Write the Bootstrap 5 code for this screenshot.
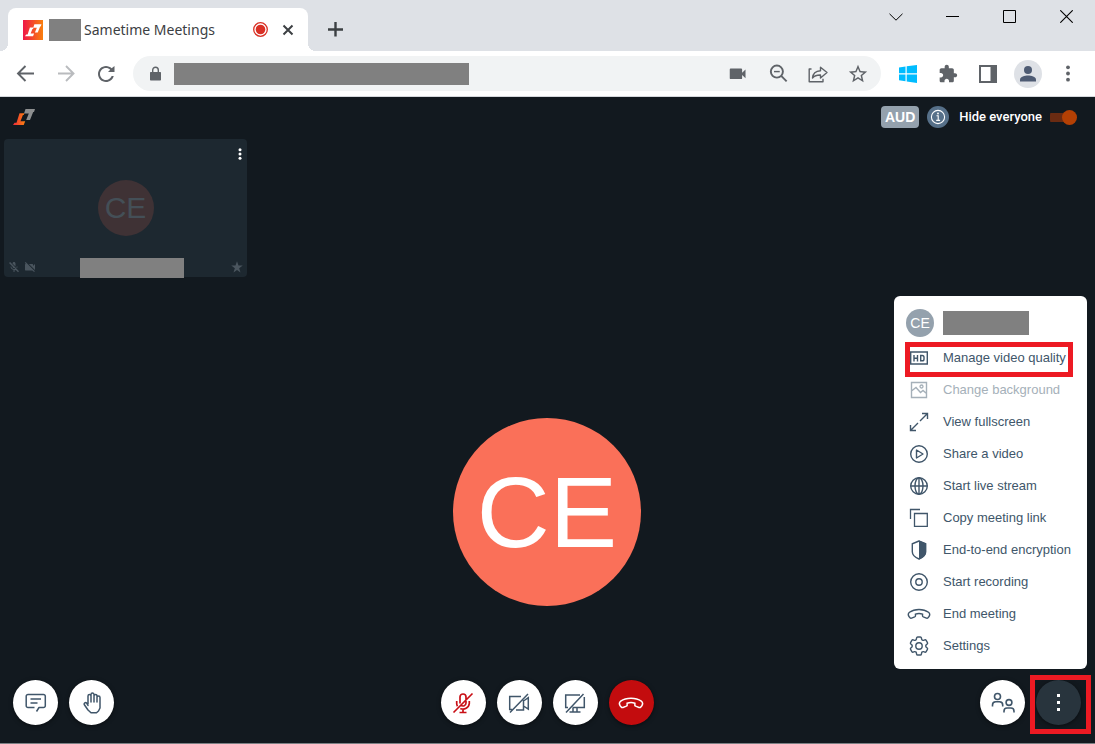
<!DOCTYPE html>
<html lang="en">
<head>
<meta charset="utf-8">
<meta name="viewport" content="width=device-width, initial-scale=1">
<title>Sametime Meetings</title>
<link href="https://cdn.jsdelivr.net/npm/bootstrap@5.3.0/dist/css/bootstrap.min.css" rel="stylesheet">
<style>
  :root { --ink: #40566a; --night: #12191f; --alert: #ed1a23; }
  body { font-family: "Liberation Sans", Arial, sans-serif; font-size: 13px; line-height: 20px; background: var(--night); border-bottom: 1px solid #7b8084; }
  svg { display: block; flex: none; }
  button { color: inherit; }
  .plain-btn { border: 0; background: none; padding: 0; display: flex; align-items: center; justify-content: center; }
  .redacted { background: #808080; flex: none; }
  .line { fill: none; stroke: currentColor; }

  /* browser chrome */
  .tabstrip { background: #dee1e6; height: 51px; color: #3c4043; }
  .tab-page { position: relative; width: 300px; height: 43px; margin: 8px 0 0 8px; padding: 0 12px 0 15px; background: #fff; border-radius: 8px 8px 0 0; }
  .tab-page::before, .tab-page::after { content: ""; position: absolute; bottom: 0; width: 8px; height: 8px; }
  .tab-page::before { left: -8px; background: radial-gradient(circle at 0 0, transparent 8px, #fff 8px); }
  .tab-page::after { right: -8px; background: radial-gradient(circle at 100% 0, transparent 8px, #fff 8px); }
  .tab-title { font-family: "Noto Sans", "Open Sans", sans-serif; font-size: 14px; margin-left: 3px; white-space: nowrap; }
  .tab-redacted { width: 32px; height: 22px; margin-left: 6px; }
  .tab-btn { width: 17px; height: 24px; margin-left: 10px; }
  .new-tab { width: 30px; height: 30px; margin: 14px 0 0 12px; }
  .win-btn { width: 57px; height: 33px; color: #000; }
  .toolbar { background: #fff; color: #5f6368; height: 46px; padding: 0 7px 0 6px; border-bottom: 1px solid #d5d8dc; }
  .tool-btn { width: 40px; height: 35px; flex: none; }
  .address { background: #f1f3f4; height: 35px; margin: 0 7px; padding: 0 3px 0 13px; border-radius: 18px; min-width: 0; }
  .url-redacted { width: 295px; height: 22px; margin-left: 10px; }
  .profile { width: 28px; height: 28px; background: #dee1e6; color: #4e5b73; }

  /* meeting */
  .meet-head { height: 42px; padding: 0 18px 2px 13px; }
  .aud { background: #94a1ad; color: #fff; font-size: 14px; height: 22px; width: 38px; border-radius: 4px; font-weight: 700; line-height: 22px; text-align: center; }
  .info-btn { width: 22px; height: 22px; background: #567089; color: #fff; margin: 0 10px 0 8px; }
  .hide-label { font-family: Roboto, "Liberation Sans", sans-serif; font-weight: 500; color: #fff; margin-right: 8px; }
  .hide-switch { appearance: none; position: relative; width: 27px; height: 15px; margin: 0; background: linear-gradient(#6a2b12, #6a2b12) 0 center / 24px 9px no-repeat; border-radius: 5px; }
  .hide-switch::before { content: ""; position: absolute; right: 0; top: 0; width: 15px; height: 15px; border-radius: 50%; background: #b44004; }
  .tile { width: 243px; height: 138px; margin-left: 4px; background: #1d2830; border-radius: 4px; display: grid; grid-template-rows: 1fr auto 1fr; color: #4a555e; }
  .tile-avatar { width: 56px; height: 56px; background: #3f3235; color: #444f57; font-size: 30px; }
  .tile-menu { color: #fff; margin: 8px 0 0 0; width: 14px; height: 14px; }
  .tile-foot { display: grid; grid-template-columns: 76px 104px 1fr; height: 20px; margin-bottom: -1px; }
  .tile-status { padding: 0 4px 2px; }
  .stage { padding: 0 1px 69px 0; }
  .big-avatar { width: 188px; height: 188px; background: #fa7059; color: #fff; font-size: 101px; }
  .controls { display: grid; grid-template-columns: 1fr auto 1fr; padding: 0 14px 18px 13px; height: 68px; align-items: end; }
  .controls > div { display: flex; gap: 11px; }
  .round-btn { width: 45px; height: 45px; border-radius: 50%; background: #fff; color: var(--ink); box-shadow: 0 1px 4px rgba(0,0,0,.5); flex: none; }
  .hangup { background: #c30c0e; color: #fff; }
  .more-on { background: #28343d; color: #fff; }
  .more-frame { position: absolute; inset: -5px -10px -9px -6px; border: 5px solid var(--alert); pointer-events: none; }

  /* overflow menu */
  .more-menu { display: block; position: absolute; right: -6px; bottom: 56px; width: 193px; min-width: 0; padding: 8px 11px 7px; border: 0; border-radius: 6px; color: var(--ink); font-size: 13px; background: #fff; }
  .more-user { height: 38px; }
  .user-avatar { width: 28px; height: 28px; background: #94a1ad; color: #fff; font-size: 14px; margin: 0 9px 0 1px; }
  .user-redacted { width: 86px; height: 24px; }
  .more-item { position: relative; display: flex; align-items: center; width: 100%; height: 32px; padding: 0; border: 0; background: none; white-space: nowrap; }
  .more-item:disabled { color: #a5b0b9; }
  .more-icon { width: 28px; margin-right: 10px; display: flex; justify-content: center; }
  .picked::after { content: ""; position: absolute; inset: 0 3px -3px 0; border: 5px solid var(--alert); }
</style>
</head>
<body class="min-vh-100 d-flex flex-column">

<svg width="0" height="0" class="position-absolute" aria-hidden="true">
  <symbol id="phone" viewBox="0 0 24 24"><path class="line" stroke-width="1.4" d="M2 14.5C1 13 1 11.5 2.5 10.3C7.5 6.6 16.5 6.6 21.5 10.3C23 11.5 23 13 22 14.5L21 15.8C20.5 16.3 20 16.3 19.4 16.1L16.3 14.9C15.6 14.6 15.4 14.2 15.5 13.5L15.6 12.2C13.3 11.3 10.7 11.3 8.4 12.2L8.5 13.5C8.6 14.2 8.4 14.6 7.7 14.9L4.6 16.1C4 16.3 3.5 16.3 3 15.8Z"/></symbol>
  <path id="mark-low" d="M6.500 4.200h5l-.8 1.900H9.900L7.500 12.200h4.700L10.700 16H0l1.500-2.300h2z"/>
  <path id="mark-high" d="M12.500 0H22l-1 3h-.8L17 11h-3.800l2.600-6.500H11z"/>
</svg>

<header>
  <div class="tabstrip d-flex align-items-start">
    <div class="tab-page d-flex align-items-center">
      <svg width="20" height="20" viewBox="0 0 20 20"><defs><linearGradient id="fav"><stop stop-color="#ef1747"/><stop offset="1" stop-color="#f9800d"/></linearGradient></defs><path fill="url(#fav)" d="M0 0h20v20H0z"/><g fill="#fff" transform="translate(2 4.300) scale(.75)"><use href="#mark-low"/><use href="#mark-high"/></g></svg>
      <span class="redacted tab-redacted"></span>
      <span class="tab-title">Sametime Meetings</span>
      <svg class="ms-auto" width="17" height="17" viewBox="0 0 17 17"><circle cx="8.500" cy="8.500" r="6.800" fill="none" stroke="#d93025" stroke-width="1.300"/><circle cx="8.500" cy="8.500" r="4.800" fill="#d93025"/></svg>
      <button class="plain-btn tab-btn" aria-label="Close tab"><svg width="12" height="12" viewBox="0 0 12 12"><path class="line" stroke-width="2" d="M1.500 1.500l9 9m0-9l-9 9"/></svg></button>
    </div>
    <button class="plain-btn new-tab" aria-label="New tab"><svg width="16" height="16" viewBox="0 0 16 16"><path class="line" stroke-width="2.400" d="M8.500 1v14.500M1 8.500h15"/></svg></button>
    <div class="d-flex ms-auto">
      <button class="plain-btn win-btn" aria-label="Search tabs"><svg width="14" height="8" viewBox="0 0 14 8"><path class="line" d="M.5 .8L7 7.200l6.500-6.400"/></svg></button>
      <button class="plain-btn win-btn" aria-label="Minimize"><svg width="13" height="13" viewBox="0 0 13 13"><path d="M0 6h13v1H0z"/></svg></button>
      <button class="plain-btn win-btn" aria-label="Maximize"><svg width="13" height="13" viewBox="0 0 13 13"><path class="line" d="M.5 .5h12v12H.5z"/></svg></button>
      <button class="plain-btn win-btn" aria-label="Close"><svg width="13" height="13" viewBox="0 0 13 13"><path class="line" stroke-width="1.100" d="M.3 .3l12.400 12.400m0-12.400L.3 12.700"/></svg></button>
    </div>
  </div>

  <div class="toolbar d-flex align-items-center">
    <button class="plain-btn tool-btn" aria-label="Back"><svg width="24" height="24" viewBox="0 0 24 24"><path class="line" stroke-width="1.900" d="M20 11.500H4.500M11.500 4L4 11.500l7.500 7.500"/></svg></button>
    <button class="plain-btn tool-btn" aria-label="Forward" disabled><svg width="24" height="24" viewBox="0 0 24 24" color="#b9bbbe"><path class="line" stroke-width="1.900" d="M4 11.500h15.500M12 4l7.500 7.500L12 19"/></svg></button>
    <button class="plain-btn tool-btn" aria-label="Reload"><svg width="24" height="24" viewBox="0 0 24 24" fill="currentColor"><path d="M17.650 6.350C16.200 4.900 14.210 4 12 4c-4.420 0-7.990 3.580-7.990 8s3.570 8 7.990 8c3.730 0 6.840-2.550 7.730-6h-2.080c-.82 2.330-3.040 4-5.650 4-3.310 0-6-2.690-6-6s2.690-6 6-6c1.660 0 3.140.69 4.220 1.780L14 10h6.500V4l-2.850 2.350z"/></svg></button>
    <div class="address d-flex align-items-center flex-fill">
      <svg width="18" height="16" viewBox="0 0 18 16"><path fill="currentColor" d="M5 6h9c.6 0 1 .4 1 1v6.500c0 .6-.4 1-1 1H5c-.6 0-1-.4-1-1V7c0-.6.4-1 1-1z"/><path class="line" stroke-width="1.400" d="M6.700 7V4a2.800 2.800 0 0 1 5.600 0v3"/></svg>
      <span class="redacted url-redacted"></span>
      <button class="plain-btn tool-btn ms-auto" aria-label="Camera"><svg width="22" height="22" viewBox="0 0 24 24" fill="currentColor"><path d="M3 7c0-.6.4-1 1-1h11.500c.6 0 1 .4 1 1v3.500l3.700-3.500v9.500l-3.700-3.500v3.500c0 .6-.4 1-1 1H4c-.6 0-1-.4-1-1z"/></svg></button>
      <button class="plain-btn tool-btn" aria-label="Zoom"><svg width="23" height="23" viewBox="0 0 24 24"><g class="line" stroke-width="2"><circle cx="10.300" cy="10" r="6.300"/><path d="M14.800 14.500l5.700 5.700"/><path stroke-width="1.500" d="M7.300 10h6"/></g></svg></button>
      <button class="plain-btn tool-btn" aria-label="Share"><svg width="20" height="20" viewBox="0 0 20 20"><path class="line" stroke-width="1.400" d="M3.500 5H1.200v12.800H15v-3M4.500 14c.4-4.500 3-7 8-7.300V3.200L19 8.500 12.500 14v-3c-3.500-.1-6 .7-8 3z" stroke-linejoin="round"/></svg></button>
      <button class="plain-btn tool-btn" aria-label="Bookmark"><svg width="22" height="22" viewBox="0 0 24 24" fill="currentColor"><path d="M22 9.240l-7.190-.62L12 2 9.190 8.630 2 9.240l5.460 4.730L5.820 21 12 17.270 18.180 21l-1.630-7.030L22 9.240zM12 15.400l-3.760 2.270 1-4.280-3.320-2.880 4.380-.38L12 6.100l1.710 4.040 4.380.38-3.320 2.880 1 4.280L12 15.400z"/></svg></button>
    </div>
    <button class="plain-btn tool-btn" aria-label="Windows extension"><svg width="18" height="18" viewBox="0 0 18 18" fill="#00bcff"><path d="M0 2.500L6.500 1.500v6.700H0zM7.700 1.300L18 0v8.200H7.700zM0 9.500h6.500v6.700L0 15.300zM7.700 9.500H18V18L7.700 16.400z"/></svg></button>
    <button class="plain-btn tool-btn" aria-label="Extensions"><svg width="20" height="20" viewBox="0 0 24 24" fill="currentColor"><path d="M20.500 11H19V7c0-1.100-.9-2-2-2h-4V3.500C13 2.120 11.880 1 10.500 1S8 2.120 8 3.500V5H4c-1.100 0-1.990.9-1.990 2v3.800H3.500c1.490 0 2.700 1.210 2.700 2.700s-1.210 2.700-2.700 2.700H2V20c0 1.100.9 2 2 2h3.800v-1.500c0-1.490 1.210-2.700 2.700-2.700 1.490 0 2.700 1.210 2.700 2.700V22H17c1.100 0 2-.9 2-2v-4h1.500c1.380 0 2.500-1.120 2.500-2.500S21.880 11 20.500 11z"/></svg></button>
    <button class="plain-btn tool-btn" aria-label="Side panel"><svg width="18" height="18" viewBox="0 0 18 18"><path class="line" stroke-width="2" d="M1 1h16v16H1z"/><path fill="currentColor" d="M11.500 1H17v16h-5.500z"/></svg></button>
    <button class="plain-btn tool-btn" aria-label="Profile"><span class="profile rounded-circle d-flex align-items-center justify-content-center"><svg width="16" height="16" viewBox="0 0 16 16" fill="currentColor"><circle cx="8" cy="4" r="4"/><path d="M0 13.500C0 10.800 5 9.500 8 9.500s8 1.300 8 4V15.500H0z"/></svg></span></button>
    <button class="plain-btn tool-btn" aria-label="Browser menu"><svg width="4" height="17" viewBox="0 0 4 17" fill="currentColor"><circle cx="2" cy="2.300" r="1.900"/><circle cx="2" cy="8.500" r="1.900"/><circle cx="2" cy="14.700" r="1.900"/></svg></button>
  </div>
</header>

<main class="flex-fill d-flex flex-column">
  <div class="meet-head d-flex align-items-center">
    <svg width="22" height="16" viewBox="0 0 22 16"><defs><linearGradient id="fire"><stop stop-color="#f0283a"/><stop offset="1" stop-color="#f98410"/></linearGradient></defs><use href="#mark-low" fill="url(#fire)"/><use href="#mark-high" fill="#8d8f90"/></svg>
    <span class="aud ms-auto">AUD</span>
    <button class="plain-btn info-btn rounded-circle" aria-label="Meeting information"><svg width="16" height="16" viewBox="0 0 16 16"><circle class="line" cx="8" cy="8" r="6.600" stroke-width="1.100"/><path class="line" stroke-width="1.100" d="M6.500 6.800h1.700v4.400M6.200 11.400h3.900"/><circle cx="8" cy="4.500" r=".9" fill="currentColor"/></svg></button>
    <label class="hide-label" for="hideAll">Hide everyone</label>
    <input class="hide-switch" type="checkbox" role="switch" id="hideAll" checked>
  </div>

  <section class="tile">
    <button class="plain-btn tile-menu ms-auto" aria-label="Participant options"><svg width="4" height="12" viewBox="0 0 4 12" fill="currentColor"><circle cx="2" cy="1.700" r="1.500"/><circle cx="2" cy="6" r="1.500"/><circle cx="2" cy="10.300" r="1.500"/></svg></button>
    <span class="tile-avatar rounded-circle mx-auto d-flex align-items-center justify-content-center">CE</span>
    <div class="tile-foot align-self-end">
      <span class="tile-status d-flex align-items-center gap-1">
        <svg width="12" height="12" viewBox="0 0 24 24" fill="currentColor"><path d="M19 11h-1.700c0 .74-.16 1.430-.43 2.050l1.230 1.230c.56-.98.9-2.090.9-3.280zm-4.020.17c0-.06.02-.11.02-.17V5c0-1.660-1.340-3-3-3S9 3.340 9 5v.18l5.980 5.990zM4.270 2L2 4l7 7c0 1.660 1.330 3 2.990 3 .22 0 .44-.03.65-.08l1.660 1.660c-.71.33-1.500.52-2.310.52-2.760 0-5.300-2.100-5.300-5.100H5c0 3.410 2.720 6.230 6 6.720V22h2v-3.280c.91-.13 1.770-.45 2.540-.9L20 22.500 22 20.500 4.270 2z"/></svg>
        <svg width="12" height="12" viewBox="0 0 24 24" fill="currentColor"><path d="M22 6l-4 4V7c0-.55-.45-1-1-1H9.800L22 18.200V6zM3.300 2L1.500 3.500 4 6c-.9 0-2 .4-2 1v11c0 .55.45 1 1 1h13.700l3.500 3 1.500-1.500z"/></svg>
      </span>
      <span class="redacted"></span>
      <span class="tile-status d-flex align-items-center justify-content-end"><svg width="12" height="12" viewBox="0 0 24 24" fill="currentColor"><path d="M12 18l7 5-2.700-8.500L23.500 9H15l-3-8.500L9 9H.5l7.200 5.500L5 23z"/></svg></span>
    </div>
  </section>

  <section class="stage flex-fill d-flex align-items-end justify-content-center">
    <div class="big-avatar rounded-circle d-flex align-items-center justify-content-center">CE</div>
  </section>

  <footer class="controls">
    <div>
      <button class="plain-btn round-btn" aria-label="Chat"><svg width="22" height="20" viewBox="0 0 22 20"><path class="line" stroke-width="1.500" stroke-linejoin="round" d="M9.500 14.500H3a1.800 1.800 0 0 1-1.800-1.800V3.300A1.800 1.800 0 0 1 3 1.500h15.500a1.800 1.800 0 0 1 1.800 1.800v9.400a1.800 1.800 0 0 1-1.800 1.800h-4.500L11.500 18.500M5.500 6h10.500M5.500 10h7"/></svg></button>
      <button class="plain-btn round-btn" aria-label="Raise hand"><svg width="24" height="24" viewBox="0 0 24 24"><path class="line" stroke-width="1.500" stroke-linecap="round" stroke-linejoin="round" d="M8 13V5a1.500 1.500 0 0 1 3 0v6M11 5V3.500a1.500 1.500 0 1 1 3 0V11M14 5a1.500 1.500 0 0 1 3 0v6M17 6.500a1.500 1.500 0 0 1 3 0V17l-1.500 3-2 1.800h-5.500L8 19l-3.800-5.500a1.500 1.500 0 0 1 2.300-1.600L8 14.500"/></svg></button>
    </div>
    <div>
      <button class="plain-btn round-btn" aria-label="Unmute microphone"><svg width="22" height="22" viewBox="0 0 22 22" color="#c90f16"><path class="line" stroke-width="1.700" d="M8 11.500V5a3 3 0 0 1 6 0v6a3 3 0 0 1-5 2.200M4.700 9v2.500c0 1 .3 1.900.8 2.700M17.300 9v2.500a6.200 6.200 0 0 1-9 4.900M11 17v3.500M7.500 20.500h7M1.500 20.500L20.500 1.500"/></svg></button>
      <button class="plain-btn round-btn" aria-label="Start camera"><svg width="22" height="22" viewBox="0 0 22 22"><path class="line" stroke-width="1.500" d="M13 4.500H1.700v13h2.500M8 18h7.500V8M15.500 9l4.800-3.300v11.500L15.500 14M2 20.500L20 2"/></svg></button>
      <button class="plain-btn round-btn" aria-label="Share screen"><svg width="22" height="22" viewBox="0 0 22 22"><path class="line" stroke-width="1.500" d="M16 3H1.700v12.500H4M20.300 5v10.500H8.500M9 16v3.800M13 16v3.800M5.500 20h11M2 20.500L19.500 2"/></svg></button>
      <button class="plain-btn round-btn hangup" aria-label="Leave meeting"><svg width="26" height="26"><use href="#phone"/></svg></button>
    </div>
    <div class="justify-content-end">
      <button class="plain-btn round-btn" aria-label="Participants"><svg width="24" height="22" viewBox="0 0 24 22"><g class="line" stroke-width="1.600"><circle cx="6.500" cy="4.500" r="3"/><path d="M1.500 14.500V13c0-2 1.300-3.300 3.200-3.300h3.800c1.900 0 3.200 1.300 3.200 3.300v1.500"/><circle cx="18" cy="10.500" r="2.900"/><path d="M13 20.500v-1.300c0-2 1.300-3.200 3-3.200h4c1.800 0 3 1.200 3 3.200v1.300"/></g></svg></button>
      <div class="position-relative">
        <button class="plain-btn round-btn more-on" aria-label="More actions" aria-expanded="true"><svg width="5" height="19" viewBox="0 0 5 19" fill="currentColor"><path d="M1 1h3v3H1zM1 8h3v3H1zM1 15h3v3H1z"/></svg></button>
        <span class="more-frame"></span>
        <div class="dropdown-menu more-menu">
          <div class="more-user d-flex align-items-center">
            <span class="user-avatar rounded-circle d-flex align-items-center justify-content-center">CE</span>
            <span class="redacted user-redacted"></span>
          </div>
          <button class="more-item picked"><span class="more-icon"><svg width="20" height="14" viewBox="0 0 20 14"><path class="line" stroke-width="1.400" d="M1.700 1h16.600v12H1.700z"/><path class="line" stroke-width="1.400" d="M5 4v6.500M8.500 4v6.500M5 7.200h3.500M11.700 4.500h1.500c1.200 0 1.800.8 1.800 1.800v1.600c0 1.200-.6 1.900-1.800 1.900h-1.500z"/></svg></span>Manage video quality</button>
          <button class="more-item" disabled><span class="more-icon"><svg width="18" height="18" viewBox="0 0 18 18"><path class="line" stroke-width="1.400" d="M1.500 1.500h15v15h-15zM1.500 10L6 6.500l4.500 5 2.500-2 3.500 3"/><circle class="line" stroke-width="1.300" cx="11.500" cy="5.500" r="1.500"/></svg></span>Change background</button>
          <button class="more-item"><span class="more-icon"><svg width="20" height="20" viewBox="0 0 20 20"><path class="line" stroke-width="1.400" d="M13 1.500h5.500V7M18.500 1.500L11 9M7 18.500H1.500V13M1.500 18.500L9 11"/></svg></span>View fullscreen</button>
          <button class="more-item"><span class="more-icon"><svg width="20" height="20" viewBox="0 0 20 20"><circle class="line" stroke-width="1.400" cx="10" cy="10" r="8.300"/><path class="line" stroke-width="1.400" stroke-linejoin="round" d="M7.500 6v8l6.500-4z"/></svg></span>Share a video</button>
          <button class="more-item"><span class="more-icon"><svg width="20" height="20" viewBox="0 0 20 20"><g class="line" stroke-width="1.400"><circle cx="10" cy="10" r="8.300"/><ellipse cx="10" cy="10" rx="4" ry="8.300"/><path d="M10 1.700v16.600M1.700 10h16.600"/></g></svg></span>Start live stream</button>
          <button class="more-item"><span class="more-icon"><svg width="20" height="20" viewBox="0 0 20 20"><path class="line" stroke-width="1.300" d="M5.500 5.500h12.800v12.800H5.500zM1.500 11V1.500H11"/></svg></span>Copy meeting link</button>
          <button class="more-item"><span class="more-icon"><svg width="20" height="20" viewBox="0 0 20 20"><path class="line" stroke-width="1.400" d="M10 1L3.300 3.800v8c0 3.200 2.500 5.500 6.700 7.200 4.200-1.700 6.700-4 6.700-7.200v-8z"/><path fill="currentColor" d="M10 .5l7 3v8.300c0 3.500-2.500 6-7 7.700z"/></svg></span>End-to-end encryption</button>
          <button class="more-item"><span class="more-icon"><svg width="20" height="20" viewBox="0 0 20 20"><g class="line" stroke-width="1.400"><circle cx="10" cy="10" r="8.300"/><circle cx="10" cy="10" r="3.200"/></g></svg></span>Start recording</button>
          <button class="more-item"><span class="more-icon"><svg width="24" height="24"><use href="#phone"/></svg></span>End meeting</button>
          <button class="more-item"><span class="more-icon"><svg width="24" height="24" viewBox="0 0 24 24"><circle class="line" stroke-width="1.400" cx="12" cy="12" r="3.200"/><path class="line" stroke-width="1.400" d="M9.594 3.940c.09-.542.56-.94 1.110-.94h2.593c.55 0 1.020.398 1.110.94l.213 1.281c.063.374.313.686.645.87.074.04.147.083.22.127.325.196.72.257 1.075.124l1.217-.456a1.125 1.125 0 0 1 1.370.49l1.296 2.247a1.125 1.125 0 0 1-.26 1.431l-1.003.827c-.293.241-.438.613-.43.992a7.723 7.723 0 0 1 0 .255c-.008.378.137.75.43.991l1.004.827c.424.35.534.955.26 1.430l-1.298 2.247a1.125 1.125 0 0 1-1.369.491l-1.217-.456c-.355-.133-.75-.072-1.076.124a6.470 6.470 0 0 1-.22.128c-.331.183-.581.495-.644.869l-.213 1.281c-.09.543-.56.94-1.110.94h-2.594c-.55 0-1.019-.398-1.110-.94l-.213-1.281c-.062-.374-.312-.686-.644-.87a6.520 6.520 0 0 1-.22-.127c-.325-.196-.72-.257-1.076-.124l-1.217.456a1.125 1.125 0 0 1-1.369-.49l-1.297-2.247a1.125 1.125 0 0 1 .26-1.431l1.004-.827c.292-.24.437-.613.43-.991a6.932 6.932 0 0 1 0-.255c.007-.38-.138-.751-.43-.992l-1.004-.827a1.125 1.125 0 0 1-.26-1.430l1.297-2.247a1.125 1.125 0 0 1 1.370-.491l1.216.456c.356.133.751.072 1.076-.124.072-.044.146-.086.22-.128.332-.183.582-.495.644-.869l.214-1.280Z"/></svg></span>Settings</button>
        </div>
      </div>
    </div>
  </footer>
</main>

<script src="https://cdn.jsdelivr.net/npm/bootstrap@5.3.0/dist/js/bootstrap.bundle.min.js"></script>
</body>
</html>
